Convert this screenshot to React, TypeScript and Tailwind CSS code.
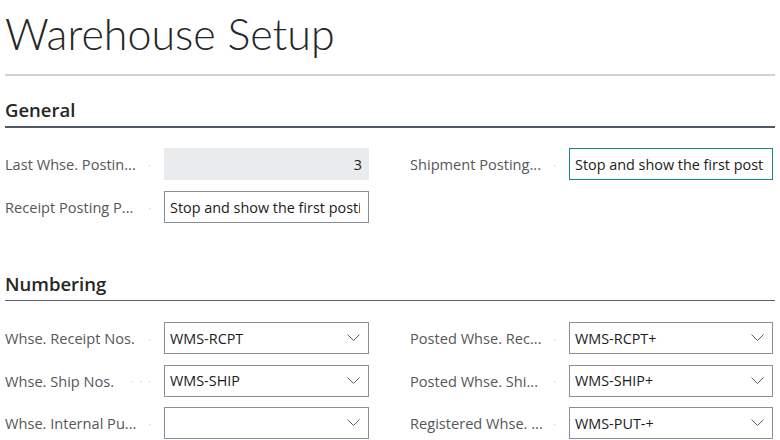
import React from 'react'

type Field = {
  label: string
  value: string
  dots?: number
  kind?: 'readonly' | 'text' | 'lookup'
  focused?: boolean
}

const general: Field[][] = [
  [
    { label: 'Last Whse. Postin...', value: '3', kind: 'readonly' },
    { label: 'Receipt Posting P...', value: 'Stop and show the first posting error', kind: 'text' },
  ],
  [{ label: 'Shipment Posting...', value: 'Stop and show the first posting error', kind: 'text', focused: true }],
]

const numbering: Field[][] = [
  [
    { label: 'Whse. Receipt Nos.', value: 'WMS-RCPT', kind: 'lookup' },
    { label: 'Whse. Ship Nos.', value: 'WMS-SHIP', kind: 'lookup', dots: 3 },
    { label: 'Whse. Internal Pu...', value: '', kind: 'lookup' },
  ],
  [
    { label: 'Posted Whse. Rec...', value: 'WMS-RCPT+', kind: 'lookup' },
    { label: 'Posted Whse. Shi...', value: 'WMS-SHIP+', kind: 'lookup' },
    { label: 'Registered Whse. ...', value: 'WMS-PUT-+', kind: 'lookup' },
  ],
]

function Chevron() {
  return (
    <svg width="13" height="8" viewBox="0 0 13 8" className="shrink-0">
      <polyline points="0.5,0.5 6.5,6.5 12.5,0.5" fill="none" stroke="#5f6368" strokeWidth="1" />
    </svg>
  )
}

function FieldRow({ field }: { field: Field }) {
  const dots = Array.from({ length: field.dots ?? 1 })
  let box = 'border border-[#8a8f98] bg-white pr-[8px]'
  if (field.kind === 'readonly') box = 'border border-[#eaebec] bg-[#eaebec] pr-[6px]'
  if (field.focused) box = 'border border-[#12858a] bg-white pr-[8px]'

  return (
    <div className="flex h-[32px] items-center">
      <div className="flex w-[159px] shrink-0 items-center pr-[13px] pt-[2px]">
        <span className="whitespace-nowrap text-[14.6px] text-[#555759]">{field.label}</span>
        <span className="flex flex-1 justify-end gap-[6px] text-[10px] leading-none text-[#c9c9c9]">
          {dots.map((_, i) => (
            <span key={i}>·</span>
          ))}
        </span>
      </div>
      <div className={`flex h-full min-w-0 flex-1 items-center overflow-hidden pl-[5px] ${box}`}>
        <span
          className={`min-w-0 flex-1 overflow-hidden whitespace-nowrap pt-[1px] text-[14.4px] text-[#1b1b1b] ${
            field.kind === 'readonly' ? 'text-right' : ''
          }`}
        >
          {field.value}
        </span>
        {field.kind === 'lookup' && <Chevron />}
      </div>
    </div>
  )
}

function Section({
  title,
  columns,
  active,
  rowGap,
}: {
  title: string
  columns: Field[][]
  active?: boolean
  rowGap: string
}) {
  return (
    <section>
      <div
        className={`flex h-[52px] items-end pb-[2px] text-[18.5px] font-semibold text-[#262626] ${
          active ? 'border-b-2 border-[#4f5969]' : 'border-b border-[#5d6168]'
        }`}
      >
        {title}
      </div>
      <div className={`grid grid-cols-[364px_363px] gap-x-[41px] ${active ? 'pt-[20px]' : 'pt-[21px]'}`}>
        {columns.map((col, ci) => (
          <div key={ci} className={`flex flex-col ${rowGap}`}>
            {col.map((f) => (
              <FieldRow key={f.label} field={f} />
            ))}
          </div>
        ))}
      </div>
    </section>
  )
}

export default function App() {
  return (
    <div
      className="h-[440px] w-[780px] overflow-hidden bg-white px-[5px]"
      style={{ fontFamily: '"Open Sans", "Noto Sans", sans-serif' }}
    >
      <div className="w-[770px]">
        <h1
          className="flex h-[76px] items-start border-b-2 border-[#d1d2d6] pt-[4px] text-[43px] font-light leading-[60px] text-[#262626]"
          style={{ fontFamily: 'Lato, "Open Sans", sans-serif' }}
        >
          Warehouse Setup
        </h1>
        <Section title="General" columns={general} active rowGap="gap-[11px]" />
        <div className="h-[26px]" />
        <Section title="Numbering" columns={numbering} rowGap="gap-[10.5px]" />
      </div>
    </div>
  )
}
